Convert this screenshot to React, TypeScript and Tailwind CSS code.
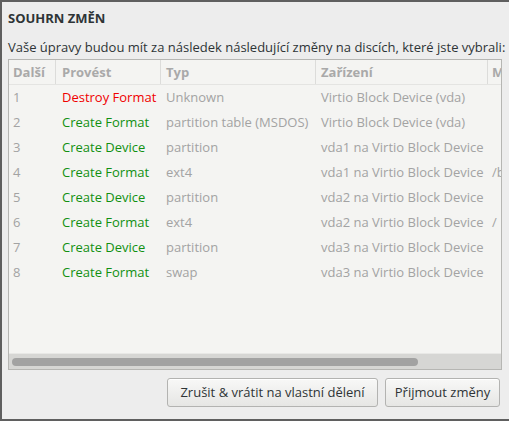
import React from 'react'

const rows = [
  { n: 1, action: 'Destroy Format', destroy: true, type: 'Unknown', device: 'Virtio Block Device (vda)', mount: '' },
  { n: 2, action: 'Create Format', destroy: false, type: 'partition table (MSDOS)', device: 'Virtio Block Device (vda)', mount: '' },
  { n: 3, action: 'Create Device', destroy: false, type: 'partition', device: 'vda1 na Virtio Block Device', mount: '' },
  { n: 4, action: 'Create Format', destroy: false, type: 'ext4', device: 'vda1 na Virtio Block Device', mount: '/boot' },
  { n: 5, action: 'Create Device', destroy: false, type: 'partition', device: 'vda2 na Virtio Block Device', mount: '' },
  { n: 6, action: 'Create Format', destroy: false, type: 'ext4', device: 'vda2 na Virtio Block Device', mount: '/' },
  { n: 7, action: 'Create Device', destroy: false, type: 'partition', device: 'vda3 na Virtio Block Device', mount: '' },
  { n: 8, action: 'Create Format', destroy: false, type: 'swap', device: 'vda3 na Virtio Block Device', mount: '' },
]

export default function App() {
  return (
    <div
      className="w-[509px] h-[421px] bg-[#ededed] border-t-2 border-l-2 border-b-2 border-[#5f5f5f] flex flex-col text-[13px] text-[#2e3436] overflow-hidden"
      style={{ fontFamily: '"Open Sans", sans-serif' }}
    >
      <h1 className="pl-[6px] pt-[6px] h-[30px] font-bold leading-[20px]">SOUHRN ZMĚN</h1>
      <p className="pl-[6px] pt-[6px] h-[27px] leading-[18px] whitespace-nowrap">
        Vaše úpravy budou mít za následek následující změny na discích, které jste vybrali:
      </p>

      <div className="ml-[6px] w-[494px] h-[311px] border border-[#b6b6b3] bg-[#f4f4f2] flex flex-col overflow-hidden">
        <div className="flex-1 overflow-hidden">
          <div className="flex h-[25px] border-b border-[#e4e4e2] font-bold text-[#a9a9a9] whitespace-nowrap">
            <div className="w-[47px] shrink-0 pl-[4px] leading-[24px] border-r border-[#dcdcda]">Další</div>
            <div className="w-[105px] shrink-0 pl-[6px] leading-[24px] border-r border-[#dcdcda]">Provést</div>
            <div className="w-[155px] shrink-0 pl-[5px] leading-[24px] border-r border-[#dcdcda]">Typ</div>
            <div className="w-[172px] shrink-0 pl-[5px] leading-[24px] border-r border-[#dcdcda]">Zařízení</div>
            <div className="w-[100px] shrink-0 pl-[4px] leading-[24px]">Mountpoint</div>
          </div>
          {rows.map((r) => (
            <div key={r.n} className="flex h-[25px] items-center whitespace-nowrap text-[#a3a3a3]">
              <div className="w-[47px] shrink-0 pl-[4px]">{r.n}</div>
              <div className={`w-[105px] shrink-0 pl-[6px] ${r.destroy ? 'text-[#f00000]' : 'text-[#119011]'}`}>{r.action}</div>
              <div className="w-[155px] shrink-0 pl-[5px] overflow-hidden">{r.type}</div>
              <div className="w-[172px] shrink-0 pl-[5px] overflow-hidden">{r.device}</div>
              <div className="w-[100px] shrink-0 pl-[4px]">{r.mount}</div>
            </div>
          ))}
        </div>
        <div className="h-[16px] bg-[#d6d6d4] border-t border-[#e8e8e6] flex items-center px-[3px]">
          <div className="w-[406px] h-[8px] rounded-full bg-[#a2a2a2]" />
        </div>
      </div>

      <div className="flex justify-end gap-[7px] pr-[9px] pt-[8px]">
        <button className="w-[211px] h-[29px] rounded-[3px] border border-[#b3b3b1] bg-gradient-to-b from-[#f8f8f7] to-[#e6e6e4] text-[#2e3436] shadow-[inset_0_1px_0_#ffffff]">
          Zrušit &amp; vrátit na vlastní dělení
        </button>
        <button className="w-[115px] h-[29px] rounded-[3px] border border-[#b3b3b1] bg-gradient-to-b from-[#f8f8f7] to-[#e6e6e4] text-[#2e3436] shadow-[inset_0_1px_0_#ffffff]">
          Přijmout změny
        </button>
      </div>
    </div>
  )
}
